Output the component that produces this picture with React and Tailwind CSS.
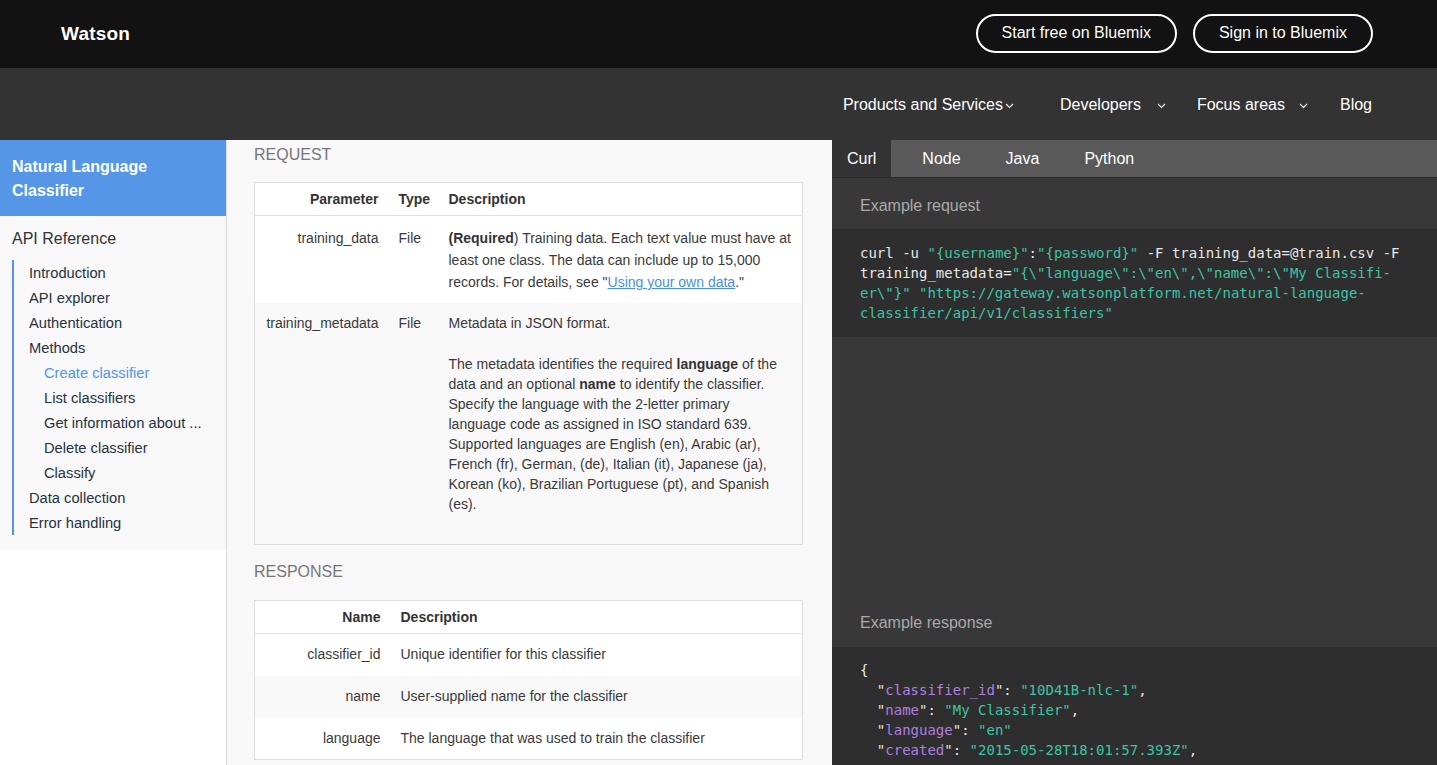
import React from 'react';

const Chevron = () => (
    <svg width="9" height="6" viewBox="0 0 9 6" fill="none" stroke="white" strokeWidth="1.1">
        <path d="M1 1l3.5 3.5L8 1" />
    </svg>
);

const navLinks = [
    { label: 'Introduction', level: 1 },
    { label: 'API explorer', level: 1 },
    { label: 'Authentication', level: 1 },
    { label: 'Methods', level: 1 },
    { label: 'Create classifier', level: 2, active: true },
    { label: 'List classifiers', level: 2 },
    { label: 'Get information about ...', level: 2 },
    { label: 'Delete classifier', level: 2 },
    { label: 'Classify', level: 2 },
    { label: 'Data collection', level: 1 },
    { label: 'Error handling', level: 1 }
];

const T = ({ children }) => <span className="text-[#3cc4a6]">{children}</span>;
const K = ({ children }) => <span className="text-[#b07ee0]">{children}</span>;

export default function App() {
    return (
        <div className="w-[1437px] h-[765px] overflow-hidden bg-white" style={{ fontFamily: '"Liberation Sans", Arial, sans-serif' }}>
            {/* Top bar */}
            <div className="h-[68px] bg-[#121212] flex items-center justify-between pl-[61px] pr-[64px]">
                <div className="text-white text-[19px] font-bold tracking-[0.2px]">Watson</div>
                <div className="flex items-center gap-[16px] -mt-[2px]">
                    <button className="h-[39px] px-[24px] rounded-full border-2 border-white text-white text-[16px]">Start free on Bluemix</button>
                    <button className="h-[39px] px-[24px] rounded-full border-2 border-white text-white text-[16px]">Sign in to Bluemix</button>
                </div>
            </div>

            {/* Nav */}
            <div className="h-[72px] bg-[#333333] flex items-center justify-end pr-[65px] pt-[2px] text-white text-[16px]">
                <div className="flex items-center">
                    <span>Products and Services</span>
                    <span className="ml-[2px] mt-[1px]"><Chevron /></span>
                </div>
                <div className="flex items-center ml-[46px]">
                    <span>Developers</span>
                    <span className="ml-[16px] mt-[1px]"><Chevron /></span>
                </div>
                <div className="flex items-center ml-[31px]">
                    <span>Focus areas</span>
                    <span className="ml-[14px] mt-[1px]"><Chevron /></span>
                </div>
                <div className="ml-[32px]">Blog</div>
            </div>

            <div className="flex h-[625px]">
                {/* Sidebar */}
                <div className="w-[226px] shrink-0">
                    <div className="bg-[#f8f8f8] pb-[15px]">
                        <div className="bg-[#5596e6] px-[12px] pt-[15px] pb-[13px] text-white text-[16px] font-bold leading-[24px]">
                            Natural Language<br />Classifier
                        </div>
                        <div className="px-[12px] pt-[13px] pb-[11px] text-[16px] leading-[20px] text-[#333]">API Reference</div>
                        <div className="ml-[12px] border-l-2 border-[#5596e6]">
                            {navLinks.map(link => (
                                <div
                                    key={link.label}
                                    className={`h-[25px] leading-[27px] text-[14.7px] ${link.level === 2 ? 'pl-[30px]' : 'pl-[15px]'} ${link.active ? 'text-[#5596e6]' : 'text-[#26323f]'}`}
                                >
                                    {link.label}
                                </div>
                            ))}
                        </div>
                    </div>
                </div>

                {/* Main */}
                <div className="w-[606px] shrink-0 border-l border-[#dcdcdc] bg-[#f8f8f8] pl-[27px] pr-[28px] text-[14px] text-[#3a3a3a]">
                    <div className="pt-[5px] mb-[17px] text-[16px] leading-[20px] text-[#777]">REQUEST</div>
                    <table className="w-[549px] table-fixed border-collapse border border-[#dddddd]">
                        <colgroup>
                            <col className="w-[134px]" />
                            <col className="w-[50px]" />
                            <col />
                        </colgroup>
                        <thead>
                            <tr className="bg-white border-b border-[#e2e2e2] h-[33px] text-[#333] font-bold">
                                <th className="pr-[10px] text-right">Parameter</th>
                                <th className="pl-[10px] text-left">Type</th>
                                <th className="pl-[10px] text-left">Description</th>
                            </tr>
                        </thead>
                        <tbody>
                            <tr className="bg-white align-top leading-[22px]">
                                <td className="pt-[11px] pb-[10px] pr-[10px] text-right">training_data</td>
                                <td className="pt-[11px] pl-[10px]">File</td>
                                <td className="pt-[11px] pb-[10px] pl-[10px] pr-[10px]">
                                    <b className="text-[#333]">(Required</b>) Training data. Each text value must have at least one class. The data can include up to 15,000 records. For details, see "<span className="text-[#4a90e2] underline">Using your own data</span>."
                                </td>
                            </tr>
                            <tr className="bg-[#f8f8f8] align-top leading-[20px]">
                                <td className="pt-[10px] pr-[10px] text-right">training_metadata</td>
                                <td className="pt-[10px] pl-[10px]">File</td>
                                <td className="pt-[10px] pb-[10px] pl-[10px] pr-[16px]">
                                    <p className="mb-[21px]">Metadata in JSON format.</p>
                                    <p className="mb-[20px]">
                                        The metadata identifies the required <b className="text-[#333]">language</b> of the data and an optional <b className="text-[#333]">name</b> to identify the classifier. Specify the language with the 2-letter primary language code as assigned in ISO standard 639. Supported languages are English (en), Arabic (ar), French (fr), German, (de), Italian (it), Japanese (ja), Korean (ko), Brazilian Portuguese (pt), and Spanish (es).
                                    </p>
                                </td>
                            </tr>
                        </tbody>
                    </table>

                    <div className="mt-[17px] mb-[18px] text-[16px] leading-[20px] text-[#777]">RESPONSE</div>
                    <table className="w-[549px] table-fixed border-collapse border border-[#dddddd]">
                        <colgroup>
                            <col className="w-[136px]" />
                            <col />
                        </colgroup>
                        <thead>
                            <tr className="bg-white border-b border-[#e2e2e2] h-[33px] text-[#333] font-bold">
                                <th className="pr-[10px] text-right">Name</th>
                                <th className="pl-[10px] text-left">Description</th>
                            </tr>
                        </thead>
                        <tbody>
                            <tr className="bg-white h-[42px]">
                                <td className="pr-[10px] text-right">classifier_id</td>
                                <td className="pl-[10px]">Unique identifier for this classifier</td>
                            </tr>
                            <tr className="bg-[#f8f8f8] h-[42px]">
                                <td className="pr-[10px] text-right">name</td>
                                <td className="pl-[10px]">User-supplied name for the classifier</td>
                            </tr>
                            <tr className="bg-white h-[42px]">
                                <td className="pr-[10px] text-right">language</td>
                                <td className="pl-[10px]">The language that was used to train the classifier</td>
                            </tr>
                        </tbody>
                    </table>
                </div>

                {/* Code panel */}
                <div className="flex-1 bg-[#383838]">
                    <div className="h-[38px] bg-[#595959] border-b border-[#2c2c2c] flex text-white text-[16px]">
                        <div className="px-[15px] bg-[#333333] flex items-center">Curl</div>
                        <div className="flex items-center gap-[45px] ml-[31px]">
                            <span>Node</span>
                            <span>Java</span>
                            <span>Python</span>
                        </div>
                    </div>
                    <div className="h-[51px] px-[28px] pt-[4px] flex items-center text-[16px] text-[#a9a9a9]">Example request</div>
                    <pre
                        className="bg-[#2e2e2e] px-[28px] py-[14px] text-[14px] leading-[20px] text-[#e8e8e8]"
                        style={{ fontFamily: '"DejaVu Sans Mono", "Liberation Mono", monospace' }}
                    >
                        curl -u <T>"{'{username}'}"</T>:<T>"{'{password}'}"</T> -F training_data=@train.csv -F{'\n'}
                        training_metadata=<T>"{'{\\"language\\":\\"en\\",\\"name\\":\\"My Classifi-'}</T>{'\n'}
                        <T>{'er\\"}"'}</T> <T>"https://gateway.watsonplatform.net/natural-language-</T>{'\n'}
                        <T>classifier/api/v1/classifiers"</T>
                    </pre>
                    <div className="h-[259px]" />
                    <div className="h-[51px] px-[28px] pt-[3px] flex items-center text-[16px] text-[#a9a9a9]">Example response</div>
                    <pre
                        className="bg-[#2e2e2e] h-[200px] px-[28px] pt-[13px] text-[14px] leading-[20px] text-[#e8e8e8]"
                        style={{ fontFamily: '"DejaVu Sans Mono", "Liberation Mono", monospace' }}
                    >
                        {'{'}{'\n'}
                        {'  "'}<K>classifier_id</K>{'": '}<T>"10D41B-nlc-1"</T>,{'\n'}
                        {'  "'}<K>name</K>{'": '}<T>"My Classifier"</T>,{'\n'}
                        {'  "'}<K>language</K>{'": '}<T>"en"</T>{'\n'}
                        {'  "'}<K>created</K>{'": '}<T>"2015-05-28T18:01:57.393Z"</T>,
                    </pre>
                </div>
            </div>
        </div>
    );
}
